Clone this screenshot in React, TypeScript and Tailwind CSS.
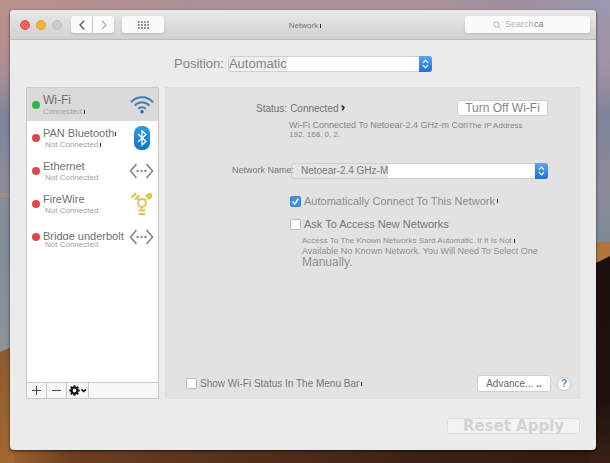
import type { ReactNode } from "react";

function Wallpaper() {
  return (
    <svg className="absolute inset-0 h-full w-full" viewBox="0 0 610 463" preserveAspectRatio="none" aria-hidden="true">
      <defs>
        <linearGradient id="dusk" x1="0" y1="0" x2="1" y2="0">
          <stop offset="0" stopColor="#bc8f8c" />
          <stop offset="0.3" stopColor="#aa9095" />
          <stop offset="0.6" stopColor="#ac9298" />
          <stop offset="0.85" stopColor="#a08f9f" />
          <stop offset="1" stopColor="#9a98b0" />
        </linearGradient>
        <linearGradient id="sky" x1="0" y1="0" x2="0" y2="1">
          <stop offset="0" stopColor="#a88e96" stopOpacity="0" />
          <stop offset="0.12" stopColor="#a88e96" stopOpacity="0.4" />
          <stop offset="0.25" stopColor="#7d839b" />
          <stop offset="0.4" stopColor="#8c8b98" />
          <stop offset="0.52" stopColor="#7f8a98" />
          <stop offset="0.75" stopColor="#8b949b" />
        </linearGradient>
        <linearGradient id="sand" x1="0" y1="0" x2="1" y2="0">
          <stop offset="0" stopColor="#a3672f" />
          <stop offset="0.12" stopColor="#6d3f20" />
          <stop offset="0.4" stopColor="#54301b" />
          <stop offset="0.7" stopColor="#3c2115" />
          <stop offset="1" stopColor="#321b12" />
        </linearGradient>
        <linearGradient id="dune" x1="0" y1="0" x2="0" y2="1">
          <stop offset="0" stopColor="#8a5a2e" />
          <stop offset="1" stopColor="#a3672f" />
        </linearGradient>
        <linearGradient id="shade" x1="0" y1="0" x2="0" y2="1">
          <stop offset="0" stopColor="#1b100f" />
          <stop offset="0.7" stopColor="#1f1210" />
          <stop offset="1" stopColor="#3a2015" />
        </linearGradient>
      </defs>
      <rect width="610" height="463" fill="url(#dusk)" />
      <rect width="610" height="463" fill="url(#sky)" />
      <rect y="193" width="14" height="4" fill="#a88d85" />
      <rect y="440" width="610" height="23" fill="url(#sand)" />
      <path d="M0 352L14 346V463H0Z" fill="url(#dune)" />
      <rect x="590" y="242" width="20" height="30" fill="#b0763f" />
      <path d="M590 266L610 256V463H590Z" fill="url(#shade)" />
    </svg>
  );
}

function Tick() {
  return <span className="inline-block h-[4px] w-px shrink-0 bg-neutral-800" aria-hidden="true" />;
}

function WifiIcon() {
  return (
    <svg width="24" height="18" viewBox="0 0 24 18" fill="none" stroke="#3f7fbd" strokeWidth="2.1" aria-hidden="true">
      <path d="M1 6.2C7 -0.4 17 -0.4 23 6.2" />
      <path d="M4.7 9.6C8.8 5.2 15.2 5.2 19.3 9.6" />
      <path d="M8.3 12.8C10.4 10.7 13.6 10.7 15.7 12.8" />
      <circle cx="12" cy="15.8" r="1.7" fill="#2f6299" stroke="none" />
    </svg>
  );
}

function BluetoothIcon() {
  return (
    <svg width="16" height="24" viewBox="0 0 16 24" fill="none" aria-hidden="true">
      <defs>
        <linearGradient id="bt" x1="0" y1="0" x2="0" y2="1">
          <stop offset="0" stopColor="#2ba0e6" />
          <stop offset="1" stopColor="#1273bd" />
        </linearGradient>
      </defs>
      <rect width="16" height="24" rx="7" fill="url(#bt)" />
      <path d="M4 8L12 15.5L8 19V5L12 8.5L4 16" stroke="#fff" strokeWidth="1.3" />
    </svg>
  );
}

function EthernetIcon() {
  return (
    <svg width="25" height="16" viewBox="0 0 25 16" fill="none" aria-hidden="true">
      <path d="M7.5 1L1.5 8L7.5 15M17.5 1L23.5 8L17.5 15" stroke="#85888f" strokeWidth="1.7" />
      <circle cx="8.6" cy="8" r="1.2" fill="#85888f" />
      <circle cx="12.5" cy="8" r="1.2" fill="#85888f" />
      <circle cx="16.4" cy="8" r="1.2" fill="#85888f" />
    </svg>
  );
}

function FirewireIcon() {
  return (
    <svg width="24" height="24" viewBox="0 0 24 24" fill="none" stroke="#e0c650" aria-hidden="true">
      <circle cx="12" cy="11" r="4" strokeWidth="1.9" />
      <path d="M5 7.6L9.2 3.4M1.6 5.6L6.2 1" strokeWidth="2.2" />
      <path d="M8.9 7.7L8 6.8M15.1 7.7L16 6.8" strokeWidth="2" />
      <path d="M18.6 7.8L14.8 3.6L17.6 1.4L21 .8L22.6 3.2L21.4 6.2Z" fill="#e0c650" stroke="none" />
      <path d="M12 15V17" strokeWidth="2" />
      <path d="M8.8 18.4H15.2M8.8 22.2H15.2" strokeWidth="2.2" />
    </svg>
  );
}

function Stepper() {
  return (
    <span className="pointer-events-none absolute inset-y-0 right-0 flex w-[13px] items-center justify-center rounded-r-[3px] bg-linear-to-b from-[#5ba6ee] to-[#1d6fdd]">
      <svg width="7" height="10" viewBox="0 0 7 10" fill="none" stroke="#fff" strokeWidth="1.2" aria-hidden="true">
        <path d="M1 3.8L3.5 1.2L6 3.8M1 6.2L3.5 8.8L6 6.2" />
      </svg>
    </span>
  );
}

function Check({ id, checked, text, label }: { id: string; checked?: boolean; text: string; label: ReactNode }) {
  return (
    <div className="flex h-4 items-center gap-[3px]">
      <span className="relative flex">
        <input
          id={id}
          type="checkbox"
          defaultChecked={checked}
          className="peer h-[11px] w-[11px] appearance-none rounded-[2px] border border-[#bdbdbd] bg-white checked:border-[#3585d8] checked:bg-[#3f8fe0]"
        />
        <svg className="pointer-events-none absolute inset-0 hidden peer-checked:block" width="11" height="11" viewBox="0 0 11 11" fill="none" stroke="#fff" strokeWidth="1.6" aria-hidden="true">
          <path d="M2.6 5.6L4.6 8L8.4 2.8" />
        </svg>
      </span>
      <label htmlFor={id} className={`flex items-center gap-[2px] whitespace-nowrap ${text}`}>
        {label}
      </label>
    </div>
  );
}

const services = [
  { name: "Wi-Fi", status: "Connected", on: true, tick: true, icon: <WifiIcon /> },
  { name: "PAN Bluetooth", status: "Not Connected", tick: true, icon: <BluetoothIcon /> },
  { name: "Ethernet", status: "Not Connected", icon: <EthernetIcon /> },
  { name: "FireWire", status: "Not Connected", icon: <FirewireIcon /> },
  { name: "Bridge underbolt", status: "Not Connected", overlap: true, icon: <EthernetIcon /> },
];

function ServiceList() {
  return (
    <section className="flex w-[133px] shrink-0 flex-col border border-[#c9c9c9] bg-white">
      <ul className="flex-1">
        {services.map((s) => (
          <li key={s.name}>
            <button type="button" className={`flex h-[33px] w-full items-center pl-[5px] pr-[4px] text-left ${s.on ? "bg-[#dadada]" : ""}`}>
              <span className={`h-2 w-2 shrink-0 rounded-full ${s.on ? "bg-[#35b44a]" : "bg-[#e0474a]"}`} />
              <span className={`ml-[3px] flex h-full min-w-0 flex-1 flex-col items-start whitespace-nowrap ${s.overlap ? "pt-[10px]" : "pt-[6px]"}`}>
                <span className={`flex items-center gap-px leading-[13px] text-[#6f6f6f] ${s.on ? "text-[12px]" : "text-[11px]"}`}>
                  {s.name}
                  {s.tick && !s.on && <Tick />}
                </span>
                <span className={`flex items-center gap-[2px] text-[8px] leading-[10px] text-[#a2a2a2] ${s.on ? "" : "pl-[2px]"} ${s.overlap ? "-mt-[3px] bg-white" : ""}`}>
                  {s.status}
                  {s.tick && <Tick />}
                </span>
              </span>
              <span className="flex w-[25px] shrink-0 justify-center">{s.icon}</span>
            </button>
          </li>
        ))}
      </ul>
      <div className="flex h-4 border-t border-[#c9c9c9] bg-[#f6f6f6] text-[#4a4a4a]">
        <button type="button" aria-label="Add service" className="flex w-[20px] items-center justify-center border-r border-[#c9c9c9]">
          <svg width="9" height="9" viewBox="0 0 9 9" stroke="currentColor"><path d="M4.5 0V9M0 4.5H9" /></svg>
        </button>
        <button type="button" aria-label="Remove service" className="flex w-[20px] items-center justify-center border-r border-[#c9c9c9]">
          <svg width="9" height="9" viewBox="0 0 9 9" stroke="currentColor"><path d="M0 4.5H9" /></svg>
        </button>
        <button type="button" aria-label="Service actions" className="flex w-[22px] items-center justify-center border-r border-[#c9c9c9]">
          <svg width="18" height="11" viewBox="0 0 18 11" fill="none" stroke="#111" aria-hidden="true">
            <circle cx="5.5" cy="5.5" r="2.9" strokeWidth="2" />
            <path d="M5.5 .3V2M5.5 9V10.7M.3 5.5H2M9 5.5H10.7M1.8 1.8L3.2 3.2M7.8 7.8L9.2 9.2M9.2 1.8L7.8 3.2M3.2 7.8L1.8 9.2" strokeWidth="2" />
            <path d="M12.4 4.4L14.7 6.5L17 4.4" strokeWidth="1.5" />
          </svg>
        </button>
      </div>
    </section>
  );
}

function TitleBar() {
  return (
    <header className="grid h-[30px] grid-cols-[1fr_auto_1fr] items-center rounded-t-[4px] border-b border-[#bcbcbc] bg-linear-to-b from-[#e9e9e9] to-[#d0d0d0] pl-[10px] pr-[6px]">
      <div className="flex items-center">
        <div className="flex gap-[6px]">
          <button type="button" aria-label="Close" className="h-[10px] w-[10px] rounded-full border border-[#de5048] bg-[#f0625b]" />
          <button type="button" aria-label="Minimize" className="h-[10px] w-[10px] rounded-full border border-[#dfa034] bg-[#f2b23e]" />
          <button type="button" aria-label="Zoom" disabled className="h-[10px] w-[10px] rounded-full border border-[#bdbdbd] bg-[#cbcbcb]" />
        </div>
        <div className="ml-[9px] flex h-[17px] gap-px">
          <button type="button" aria-label="Back" className="flex w-[21px] items-center justify-center rounded-l-[3px] bg-[#fbfbfb] shadow-sm">
            <svg width="6" height="10" viewBox="0 0 6 10" fill="none" stroke="#5c5c5c" strokeWidth="1.4"><path d="M5.2 .8L1 5L5.2 9.2" /></svg>
          </button>
          <button type="button" aria-label="Forward" className="flex w-[21px] items-center justify-center rounded-r-[3px] bg-[#fbfbfb] shadow-sm">
            <svg width="6" height="10" viewBox="0 0 6 10" fill="none" stroke="#b5b5b5" strokeWidth="1.4"><path d="M.8 .8L5 5L.8 9.2" /></svg>
          </button>
        </div>
        <button type="button" aria-label="Show all" className="ml-[8px] flex h-[17px] w-[42px] items-center justify-center rounded-[3px] bg-[#fbfbfb] shadow-sm">
          <svg width="11" height="8" viewBox="0 0 11 8" fill="none" stroke="#555" strokeWidth="1.6" strokeDasharray="1.6 1.5">
            <path d="M0 1H11M0 4H11M0 7H11" />
          </svg>
        </button>
      </div>
      <h1 className="flex items-center gap-[2px] pt-[3px] text-[8px] text-[#777]">
        Network <Tick />
      </h1>
      <label className="flex h-[17px] w-[125px] items-center justify-self-end rounded-[3px] bg-[#fbfbfb] pl-[28px] text-[9px] shadow-sm">
        <svg width="8" height="8" viewBox="0 0 8 8" fill="none" stroke="#b0b0b0" aria-hidden="true"><circle cx="3.4" cy="3.4" r="2.7" /><path d="M5.4 5.4L7.6 7.6" /></svg>
        <input type="text" aria-label="Search" placeholder="Search" className="ml-[4px] w-[29px] bg-transparent outline-none placeholder:text-[#b5b5b5]" />
        <span className="text-[#777]">ca</span>
      </label>
    </header>
  );
}

function WifiPanel() {
  return (
    <section className="flex min-w-0 flex-1 flex-col border border-[#dedede] bg-[#e2e2e2] pb-[6px] pt-[12px] pr-[8px] text-[#858585]">
      <div className="ml-[90px] mr-[23px] flex h-4 items-center gap-[3px] whitespace-nowrap text-[10px] text-[#6f6f6f]">
        <span>Status:</span>
        <span className="flex items-center gap-[2px]">
          Connected
          <svg width="4" height="6" viewBox="0 0 4 6" fill="none" stroke="#222" strokeWidth="1.6" aria-hidden="true"><path d="M.6 .6L3 2.6L1 5.4" /></svg>
        </span>
        <button type="button" className="ml-auto h-4 w-[91px] rounded-[3px] border border-[#cfcfcf] bg-white text-[12px] leading-[14px] text-[#858585]">
          Turn Off Wi-Fi
        </button>
      </div>
      <p className="ml-[123px] mt-[5px] whitespace-nowrap text-[9px] leading-[9px]">
        Wi-Fi Connected To Netoear-2.4 GHz-m Con<span className="text-[8px]">The IP Address</span>
        <br />
        <span className="text-[8px]">192. 168. 0. 2.</span>
      </p>

      <div className="ml-[66px] mr-[23px] mt-[24px] flex h-4 items-center">
        <label htmlFor="network" className="relative z-10 w-[59px] whitespace-nowrap text-[9px] text-[#777]">
          Network Name:
        </label>
        <span className="relative flex h-full flex-1">
          <select id="network" className="h-full w-full appearance-none rounded-[3px] border border-[#cfcfcf] bg-linear-to-r from-[#e6e6e6] from-[96px] to-white to-[96px] pl-[9px] text-[10px] leading-[14px] text-[#777] outline-none">
            <option>Netoear-2.4 GHz-M</option>
          </select>
          <Stepper />
        </span>
      </div>

      <div className="ml-[124px] mt-[14px] flex flex-col gap-[7px]">
        <Check id="auto" checked text="text-[11px] text-[#8d8d8d]" label={<>Automatically Connect To This Network<Tick /></>} />
        <Check id="ask" text="text-[11px] text-[#777]" label="Ask To Access New Networks" />
      </div>
      <div className="ml-[136px] mt-[3px] whitespace-nowrap leading-[11px] text-[#8f8f8f]">
        <p className="flex items-center gap-[2px] text-[8px]">Access To The Known Networks Sard Automatic. If It Is Not<Tick /></p>
        <p className="text-[9px]">Available No Known Network. You Will Need To Select One</p>
        <p className="text-[12px]">Manually.</p>
      </div>

      <div className="ml-[20px] mt-auto flex h-[17px] items-center">
        <Check id="menubar" text="text-[10px] text-[#777]" label={<>Show Wi-Fi Status In The Menu Bar<Tick /></>} />
        <button type="button" className="ml-auto h-[17px] w-[74px] rounded-[3px] border border-[#cfcfcf] bg-white text-[10px] leading-[15px] text-[#666]">
          Advance... <b>..</b>
        </button>
        <button type="button" aria-label="Help" className="ml-[6px] h-[14px] w-[14px] rounded-full border border-[#c4c4c4] bg-white text-[10px] font-bold leading-[12px] text-[#5c86ad]">
          ?
        </button>
      </div>
    </section>
  );
}

export default function App() {
  return (
    <div className="relative flex min-h-screen flex-col pb-[13px] pl-[10px] pr-[14px] pt-[10px] font-['Liberation_Sans',Arial,sans-serif]">
      <Wallpaper />
      <div className="relative flex flex-1 flex-col rounded-[4px] bg-[#ebebeb] shadow-[0_1px_3px_rgba(0,0,0,0.7)]">
        <TitleBar />
        <main className="flex flex-1 flex-col px-4 pb-4 pt-4">
          <div className="flex h-4 items-center justify-center text-[13px] text-[#858585]">
            <label htmlFor="position">Position:</label>
            <span className="relative ml-[4px] flex h-full w-[204px]">
              <select id="position" className="h-full w-full appearance-none rounded-[3px] border border-[#cfcfcf] bg-linear-to-r from-[#efefef] from-[58px] to-white to-[58px] text-[13px] leading-[14px] outline-none">
                <option>Automatic</option>
              </select>
              <Stepper />
            </span>
          </div>
          <div className="mt-[15px] flex flex-1 gap-[6px]">
            <ServiceList />
            <WifiPanel />
          </div>
          <footer className="mt-[19px] flex justify-end">
            <button type="button" disabled className="h-4 w-[133px] whitespace-nowrap rounded-[3px] border border-[#dedede] bg-[#f3f3f3] font-['DejaVu_Sans',sans-serif] text-[15px] font-bold leading-[14px] text-[#d2d2d2]">
              Reset Apply
            </button>
          </footer>
        </main>
      </div>
    </div>
  );
}
